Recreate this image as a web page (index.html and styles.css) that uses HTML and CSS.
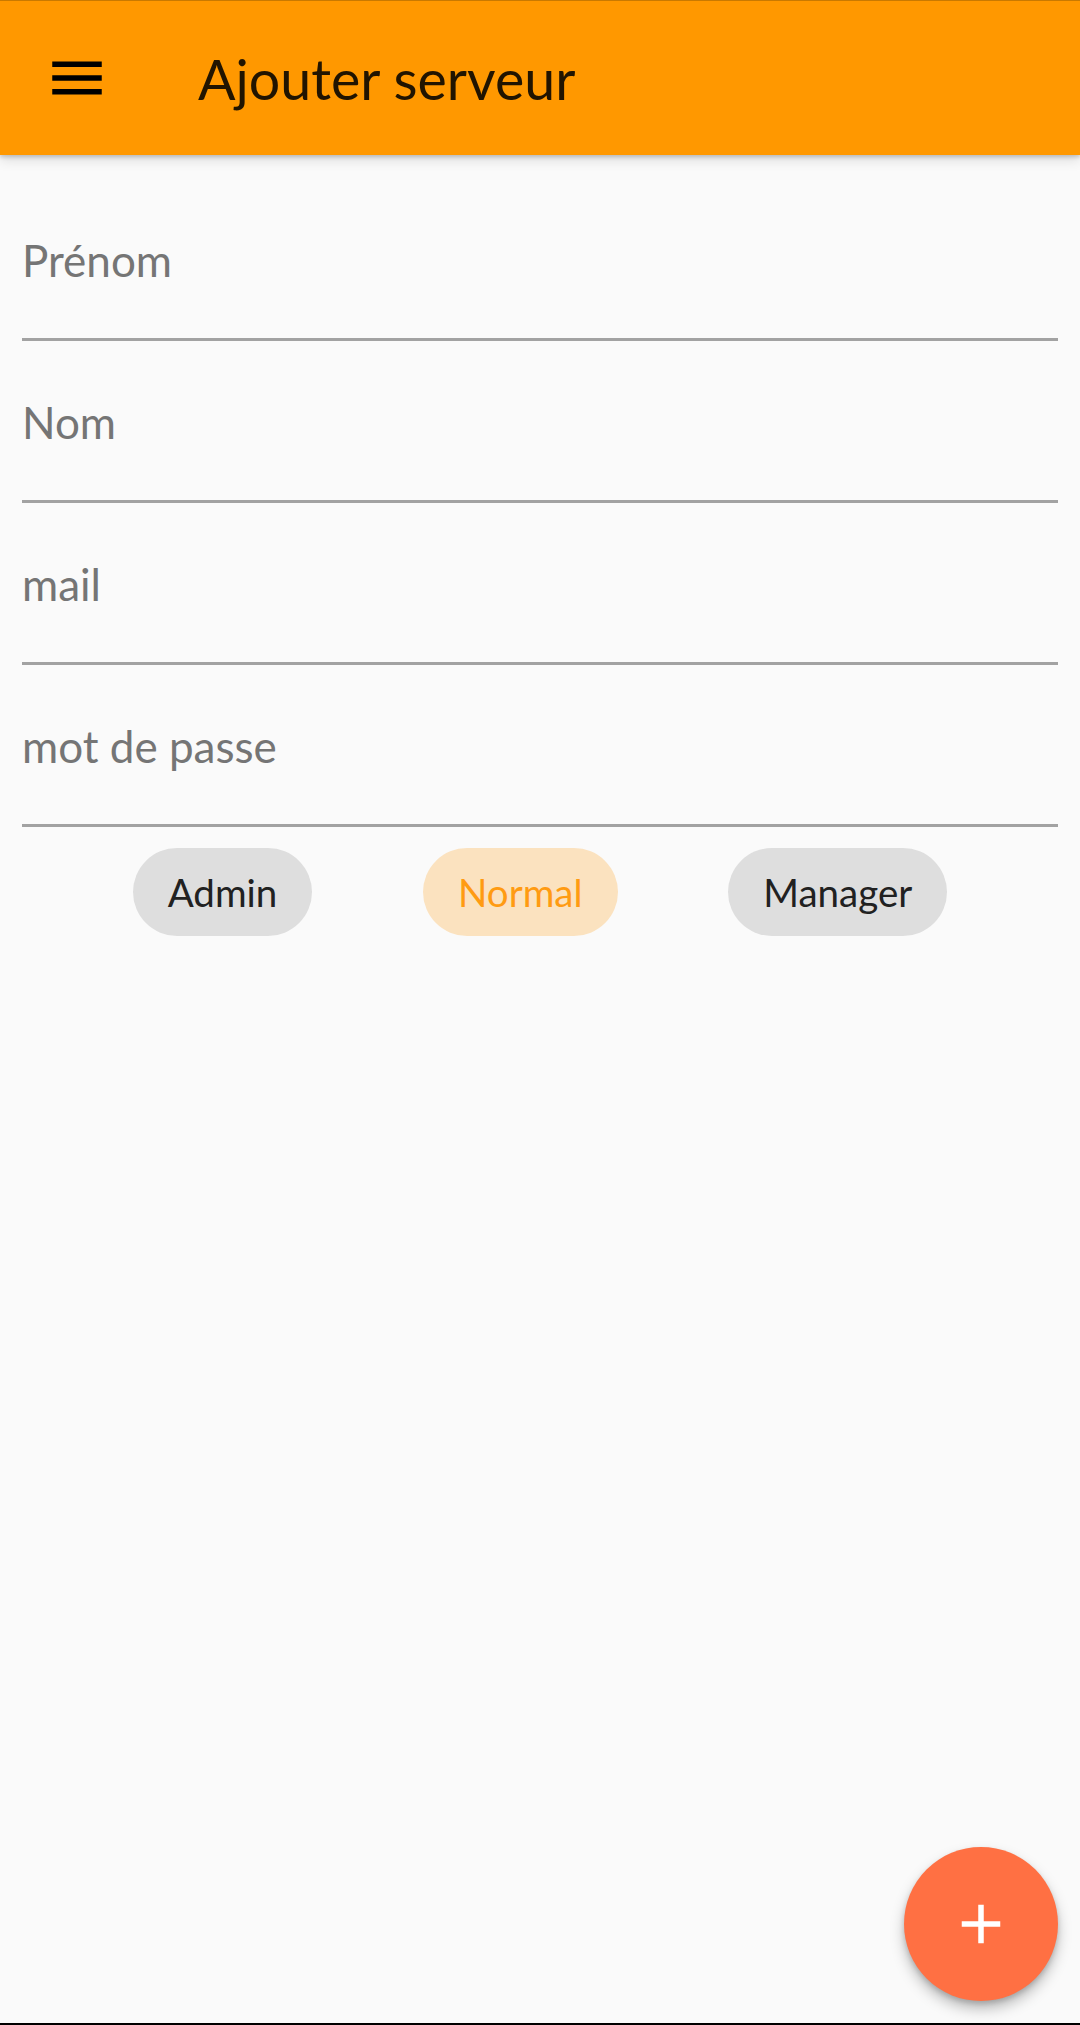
FILE: index.html
```html
<!DOCTYPE html>
<html lang="fr">
<head>
<meta charset="utf-8">
<title>Ajouter serveur</title>
<link rel="stylesheet" href="styles.css">
</head>
<body>
<div class="screen">
  <header class="toolbar">
    <span class="nav-icon">
      <svg viewBox="0 0 24 24" width="66" height="66"><path d="M3 18h18v-2H3v2zm0-5h18v-2H3v2zm0-7v2h18V6H3z" fill="#000"/></svg>
    </span>
    <h1 class="title">Ajouter serveur</h1>
  </header>
  <form class="form">
    <div class="field"><span class="hint">Prénom</span></div>
    <div class="field"><span class="hint">Nom</span></div>
    <div class="field"><span class="hint">mail</span></div>
    <div class="field"><span class="hint">mot de passe</span></div>
    <div class="chips">
      <span class="chip">Admin</span>
      <span class="chip chip-selected">Normal</span>
      <span class="chip">Manager</span>
    </div>
  </form>
  <button class="fab" type="button" aria-label="Ajouter">
    <svg viewBox="0 0 24 24" width="66" height="66"><path d="M19 13h-6v6h-2v-6H5v-2h6V5h2v6h6v2z" fill="#fff"/></svg>
  </button>
</div>
</body>
</html>
```

FILE: styles.css
```css
html, body {
  margin: 0;
  padding: 0;
}
body {
  background: #fafafa;
  font-family: Lato, "Liberation Sans", sans-serif;
}
.screen {
  position: relative;
  height: 2025px;
  box-sizing: border-box;
  border-bottom: 2px solid #000;
  overflow: hidden;
  background: #fafafa;
}
.toolbar {
  position: relative;
  z-index: 2;
  height: 155px;
  box-sizing: border-box;
  border-top: 1px solid #c97900;
  background: #ff9800;
  display: flex;
  align-items: center;
  padding-left: 44px;
  box-shadow: 0 2px 4px rgba(0,0,0,0.18), 0 5px 12px rgba(0,0,0,0.12);
}
.nav-icon {
  width: 66px;
  height: 66px;
  display: flex;
}
.title {
  margin: 2px 0 0 88px;
  font-size: 55.5px;
  font-weight: 400;
  line-height: 66px;
  color: rgba(0,0,0,0.87);
}
.form {
  padding: 24px 22px 0;
  display: flex;
  flex-direction: column;
}
.field {
  padding: 55px 0 51px;
  line-height: 53px;
  font-size: 44px;
  border-bottom: 3px solid #a2a2a2;
}
.hint {
  color: #757575;
}
.chips {
  margin-top: 21px;
  display: flex;
  justify-content: space-evenly;
}
.chip {
  height: 88px;
  line-height: 88px;
  padding: 0 35px;
  border-radius: 44px;
  background: #dedede;
  color: #212121;
  font-size: 38.5px;
}
.chip-selected {
  background: #fbe2bf;
  color: #ff9b12;
}
.fab {
  position: absolute;
  right: 22px;
  bottom: 22px;
  width: 154px;
  height: 154px;
  border: none;
  border-radius: 50%;
  background: #ff7043;
  padding: 0;
  display: flex;
  align-items: center;
  justify-content: center;
  box-shadow: 0 8px 14px rgba(0,0,0,0.25), 0 3px 5px rgba(0,0,0,0.15);
}
```
